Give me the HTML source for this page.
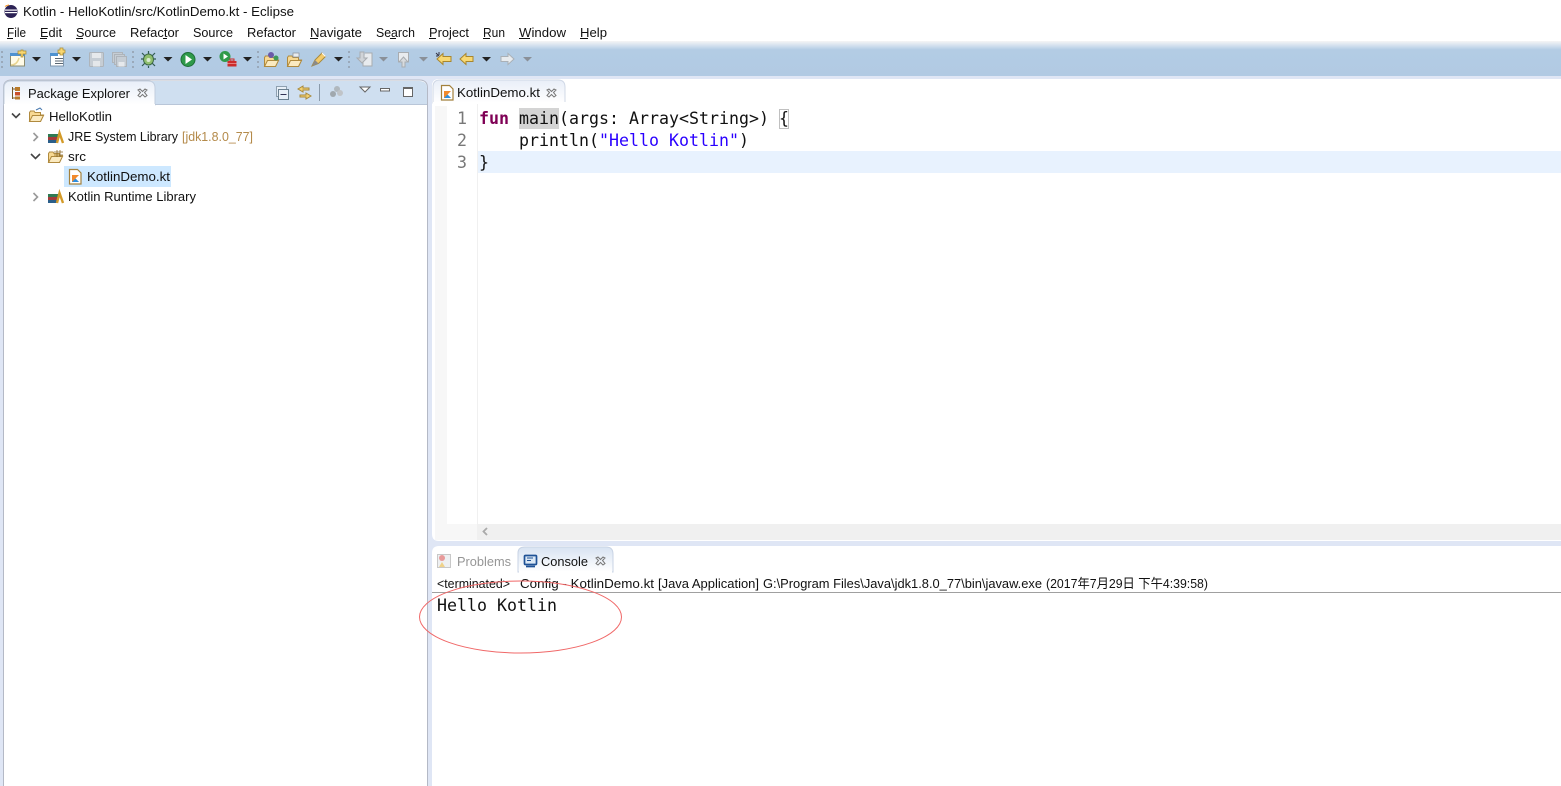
<!DOCTYPE html>
<html><head><meta charset="utf-8"><title>Kotlin - HelloKotlin/src/KotlinDemo.kt - Eclipse</title>
<style>
html,body{margin:0;padding:0;width:1561px;height:786px;overflow:hidden;background:#fff}
svg{display:block}
text{font-family:"Liberation Sans","Noto Sans CJK SC",sans-serif;font-size:13px;fill:#111}
.m{font-family:"DejaVu Sans Mono","Liberation Mono",monospace;font-size:16.6px;fill:#111}
</style></head><body>
<svg width="1561" height="786" viewBox="0 0 1561 786" xmlns="http://www.w3.org/2000/svg">
<defs>
<linearGradient id="tb" x1="0" y1="0" x2="0" y2="1"><stop offset="0" stop-color="#f5f5f5"/><stop offset=".12" stop-color="#d6e2ef"/><stop offset=".25" stop-color="#b3cce4"/><stop offset="1" stop-color="#b1cae3"/></linearGradient>
<linearGradient id="tab" x1="0" y1="0" x2="0" y2="1"><stop offset="0" stop-color="#e8eef8"/><stop offset="1" stop-color="#fff"/></linearGradient>
<linearGradient id="cn" x1="0" y1="0" x2="0" y2="1"><stop offset="0" stop-color="#d8e3f2"/><stop offset="1" stop-color="#fff"/></linearGradient>
<g id="lib"><rect x="0" y="4" width="10" height="3" fill="#2f7a52"/><rect x="0" y="7" width="10" height="3" fill="#a33b3b"/><rect x="0" y="10" width="10" height="3" fill="#2b5f8a"/><path d="M9 13 L11.500 3 L15 13" fill="none" stroke="#d39a28" stroke-width="2.400"/></g>
<g id="kt"><path d="M1.500 .5h8l3.500 3.500v11h-11.500z" fill="#fff" stroke="#a3813c" stroke-width="1.200"/><path d="M4 6h7L7.500 9.500l3.500 3.500H4z" fill="#f28a2c"/><path d="M4 13l3.500-3.500 3.500 3.500z" fill="#2d8fe0"/></g>
<g id="x" fill="none" stroke="#777" stroke-width="1"><path d="M1 2l2-1 2.500 2.500L8 1l2 1-2.500 2.500L10 7.500 8 9 5.500 6.500 3 9 1 7.500 3.500 4.500z"/></g>
<path id="dd" d="M0 0h9l-4.500 4.500z"/>
<g id="grip" fill="#9aa9ba"><rect x="0" y="0" width="2" height="2"/><rect x="0" y="5" width="2" height="2"/><rect x="0" y="10" width="2" height="2"/><rect x="0" y="15" width="2" height="2"/></g>
<g id="folder"><path d="M.5 4.500v9h11l3-6.500h-3V4.500H6L5 3H1.500z" fill="#f8d993" stroke="#b08a3e"/><path d="M.5 13.500l3-6h11l-3 6z" fill="#fbeac0" stroke="#b08a3e"/></g>
</defs>

<rect width="1561" height="786" fill="#fff"/>
<!-- title -->
<circle cx="11" cy="11.500" r="6.500" fill="#2c2255"/><rect x="5" y="9.500" width="12" height="1.200" fill="#fff"/><rect x="5" y="12" width="12" height="1.200" fill="#fff"/><path d="M5 6.500A7 7 0 0 1 9 5" stroke="#f7941e" stroke-width="1" fill="none"/>
<text x="23" y="16" textLength="271" lengthAdjust="spacingAndGlyphs">Kotlin - HelloKotlin/src/KotlinDemo.kt - Eclipse</text>
<!-- menu -->
<g>
<text x="7" y="37" textLength="19" lengthAdjust="spacingAndGlyphs">File</text><rect x="7" y="38" width="6" height="1" fill="#111"/>
<text x="40" y="37" textLength="22" lengthAdjust="spacingAndGlyphs">Edit</text><rect x="40" y="38" width="7" height="1" fill="#111"/>
<text x="76" y="37" textLength="40" lengthAdjust="spacingAndGlyphs">Source</text><rect x="76" y="38" width="7" height="1" fill="#111"/>
<text x="130" y="37" textLength="49" lengthAdjust="spacingAndGlyphs">Refactor</text><rect x="163" y="38" width="4" height="1" fill="#111"/>
<text x="193" y="37" textLength="40" lengthAdjust="spacingAndGlyphs">Source</text>
<text x="247" y="37" textLength="49" lengthAdjust="spacingAndGlyphs">Refactor</text>
<text x="310" y="37" textLength="52" lengthAdjust="spacingAndGlyphs">Navigate</text><rect x="310" y="38" width="8" height="1" fill="#111"/>
<text x="376" y="37" textLength="39" lengthAdjust="spacingAndGlyphs">Search</text><rect x="390" y="38" width="6" height="1" fill="#111"/>
<text x="429" y="37" textLength="40" lengthAdjust="spacingAndGlyphs">Project</text><rect x="429" y="38" width="7" height="1" fill="#111"/>
<text x="483" y="37" textLength="22" lengthAdjust="spacingAndGlyphs">Run</text><rect x="483" y="38" width="7" height="1" fill="#111"/>
<text x="519" y="37" textLength="47" lengthAdjust="spacingAndGlyphs">Window</text><rect x="519" y="38" width="11" height="1" fill="#111"/>
<text x="580" y="37" textLength="27" lengthAdjust="spacingAndGlyphs">Help</text><rect x="580" y="38" width="8" height="1" fill="#111"/>
</g>
<!-- toolbar -->
<rect y="41" width="1561" height="35" fill="url(#tb)"/>
<rect y="76" width="1561" height="710" fill="#dfe6f5"/>
<use href="#grip" x="1" y="51"/><use href="#grip" x="132" y="51"/><use href="#grip" x="257" y="51"/><use href="#grip" x="348" y="51"/>
<!-- new -->
<rect x="10.500" y="53.500" width="14" height="12.500" fill="#fffbe8" stroke="#8c8c70"/><rect x="10" y="53" width="15" height="3" fill="#4f92d0"/><path d="M11 65q6 0 8-7" stroke="#e8d490" stroke-width="1.500" fill="none"/><path d="M19.500 51v-1h3v-1h2v1h3v3h-3v3h-2v-3h-3z" transform="translate(-1.500 1)" fill="#f9d772" stroke="#a98a30" stroke-width=".7"/>
<use href="#dd" x="32" y="57" fill="#222"/>
<rect x="50.500" y="53.500" width="13" height="12.500" fill="#fff" stroke="#7f96ad"/><rect x="50" y="53" width="8" height="3" fill="#4f92d0"/><path d="M55 58.500h8M55 61h8M55 63.500h8" stroke="#5a6672"/><path d="M58 53v-3h2v-2h3v2h2v3h-2v2h-3v-2z" fill="#f9d772" stroke="#a98a30" stroke-width=".7"/>
<use href="#dd" x="72" y="57" fill="#222"/>
<!-- save -->
<rect x="89.500" y="52.500" width="14" height="14" rx="1" fill="#c6cdd4" stroke="#aeb4ba"/><rect x="92" y="53" width="9" height="5" fill="#e6e9ec"/><rect x="93" y="61" width="7" height="5.500" fill="#e4e7ea"/>
<rect x="112.500" y="52.500" width="10" height="10" fill="#c6cdd4" stroke="#aeb4ba"/><rect x="114.500" y="54.500" width="10" height="10" fill="#c6cdd4" stroke="#aeb4ba"/><rect x="116.500" y="56.500" width="10" height="10" fill="#c6cdd4" stroke="#aeb4ba"/><rect x="118.500" y="62" width="6" height="4.500" fill="#e6e9ec"/>
<!-- debug -->
<path d="M142 53l4 4M155 53l-4 4M141 59h4M156 59h-4M142 66l4-4M155 66l-4-4M148.500 51v3M148.500 66v2" stroke="#2f5a50" stroke-width="1.200"/><ellipse cx="148.500" cy="59.500" rx="5" ry="5.500" fill="#8fbf6e" stroke="#3f6a48"/><circle cx="148.500" cy="60" r="2" fill="#d8ead0"/>
<use href="#dd" x="163.500" y="57" fill="#222"/>
<circle cx="188" cy="59.500" r="7" fill="#2f9a4a" stroke="#1d6e35"/><path d="M185.500 55l6.500 4.500-6.500 4.500z" fill="#fff"/>
<use href="#dd" x="203" y="57" fill="#222"/>
<circle cx="225" cy="56.500" r="5.500" fill="#2f9a4a"/><path d="M223.500 53.500l4.500 3-4.500 3z" fill="#fff"/><rect x="227.500" y="61" width="9" height="5.500" fill="#cc2b2b"/><rect x="230" y="59" width="4" height="2" fill="none" stroke="#cc2b2b"/><path d="M227.500 63.500h9" stroke="#f0a0a0" stroke-width=".7"/>
<use href="#dd" x="243" y="57" fill="#222"/>
<!-- open -->
<use href="#folder" x="264" y="53"/><circle cx="271" cy="55" r="3" fill="#6a5aa8"/><circle cx="276" cy="58" r="2.500" fill="#3f9a5a"/>
<use href="#folder" x="287" y="53"/><rect x="293" y="53" width="6" height="4" fill="#e8ecf0" stroke="#8a8f96" stroke-width=".7"/>
<path d="M312 66l3-6 7-7 3.500 3.500-7 7z" fill="#f4cb6b" stroke="#a88a3c"/><path d="M312 66l3-6 3.500 3.500z" fill="#8a8a8a"/><path d="M322 53l3.500 3.500" stroke="#fff"/>
<use href="#dd" x="334" y="57" fill="#222"/>
<!-- nav -->
<path d="M365 53h7v13h-9v-4" fill="#e8ebee" stroke="#a8acb0"/><path d="M360 52h4v6h3l-5 5-5-5h3z" fill="#d0d4d8" stroke="#a8acb0"/>
<use href="#dd" x="379" y="57" fill="#8a9098"/>
<path d="M398.500 52.500h10v9h-10z" fill="#e8ebee" stroke="#a8acb0"/><path d="M402 67v-5h-3l4.500-5 4.500 5h-3v5z" fill="#d8dbde" stroke="#a8acb0"/>
<use href="#dd" x="419" y="57" fill="#8a9098"/>
<path d="M437 59l6-5.500v3h8v5h-8v3z" fill="#f8d872" stroke="#a8862e"/><path d="M436 53l3 3M439 52v3M436 56h2" stroke="#334"/>
<path d="M460 59l6-5.500v3h7v5h-7v3z" fill="#f8d872" stroke="#a8862e"/>
<use href="#dd" x="482" y="57" fill="#222"/>
<path d="M514 59l-6-5.500v3h-7v5h7v3z" fill="#e8ebee" stroke="#aab0b6"/>
<use href="#dd" x="523" y="57" fill="#8a9098"/>

<!-- left panel -->
<path d="M3.500 786V88q0-8 8-8h408q8 0 8 8v698" fill="#fff" stroke="#b4b9c6"/>
<path d="M4 104V88q0-7 7-7h408q8 0 8 7v16z" fill="#cfdff0"/>
<path d="M4 105V88q0-7 7-7h137q7 0 7 7v17z" fill="url(#tab)" stroke="#c2cede"/>
<rect x="4" y="104" width="423" height="1" fill="#b9c6d8"/><rect x="4" y="104" width="151" height="1.500" fill="#fff"/>
<!-- pkg icon -->
<path d="M12.500 87v12" stroke="#7a5a2a"/><path d="M13 89h2M13 98h2" stroke="#7a5a2a"/><rect x="15" y="87" width="5" height="4" fill="#b97a2a"/><rect x="15" y="92" width="5" height="3.500" fill="#c9502a"/><rect x="15" y="96.500" width="5" height="3" fill="#b97a2a"/>
<text x="28" y="98" textLength="102" lengthAdjust="spacingAndGlyphs">Package Explorer</text>
<use href="#x" x="137" y="88"/>
<!-- panel toolbar -->
<rect x="276.500" y="86.500" width="10" height="10" fill="#e8f0f8" stroke="#8ea0b0"/><rect x="278.500" y="89.500" width="10" height="10" fill="#e8f0f8" stroke="#6a8090"/><path d="M280.500 94.500h6" stroke="#335"/>
<path d="M303 86l-5 3 5 3v-2h6v-2h-6z" fill="#f4d272" stroke="#a88a3c"/><path d="M306 93l5 3-5 3v-2h-6v-2h6z" fill="#f4d272" stroke="#a88a3c"/>
<rect x="319" y="84" width="1" height="17" fill="#8a9aaa"/>
<circle cx="337" cy="89" r="3" fill="#b0b8be"/><circle cx="333" cy="94" r="3" fill="#a0a8ae"/><circle cx="340" cy="93" r="3" fill="#c0c4c8"/>
<path d="M360 87h10l-5 5z" fill="#fff" stroke="#666"/>
<rect x="380.500" y="88.500" width="9" height="2.500" fill="#fff" stroke="#666"/>
<rect x="403.500" y="87.500" width="9" height="9" fill="#fff" stroke="#666"/><rect x="403" y="87" width="10" height="2" fill="#666"/>
<!-- tree -->
<path d="M12 113.500l4 4 4-4" fill="none" stroke="#444" stroke-width="1.600"/>
<use href="#folder" x="29" y="108"/><path d="M36 110l4-2 2 2" fill="none" stroke="#4a7ab0"/>
<text x="49" y="121" textLength="63" lengthAdjust="spacingAndGlyphs">HelloKotlin</text>
<path d="M33.500 133l4 4-4 4" fill="none" stroke="#999" stroke-width="1.600"/>
<use href="#lib" x="48" y="130"/>
<text x="68" y="141" textLength="110" lengthAdjust="spacingAndGlyphs">JRE System Library</text>
<text x="182" y="141" textLength="71" lengthAdjust="spacingAndGlyphs" style="fill:#b48a4a">[jdk1.8.0_77]</text>
<path d="M31 154l4.500 4.500 4.500-4.500" fill="none" stroke="#444" stroke-width="1.600"/>
<use href="#folder" x="48" y="149"/><path d="M54 152h9M54 155h9M57 150v7M60 150v7" stroke="#8a6a2a" stroke-width=".8"/>
<text x="68" y="161" textLength="18" lengthAdjust="spacingAndGlyphs">src</text>
<rect x="64" y="166" width="107" height="21" fill="#cde8ff"/>
<use href="#kt" x="68" y="169"/>
<text x="87" y="181" textLength="83" lengthAdjust="spacingAndGlyphs">KotlinDemo.kt</text>
<path d="M33.500 193l4 4-4 4" fill="none" stroke="#999" stroke-width="1.600"/>
<use href="#lib" x="48" y="190"/>
<text x="68" y="201" textLength="128" lengthAdjust="spacingAndGlyphs">Kotlin Runtime Library</text>

<!-- editor -->
<path d="M432 534V86q0-7 7-7h1122v462H439q-7 0-7-7z" fill="#fff"/>
<path d="M433 103V87q0-7 7-7h118q7 0 7 7v16z" fill="url(#tab)" stroke="#d0d8e6"/>
<rect x="433" y="102" width="1128" height="2" fill="#fff"/>
<use href="#kt" x="440" y="85"/>
<text x="457" y="97" textLength="83" lengthAdjust="spacingAndGlyphs">KotlinDemo.kt</text>
<use href="#x" x="546" y="88"/>
<rect x="435" y="106" width="12" height="418" fill="#f7f7f7"/><rect x="477" y="104" width="1" height="420" fill="#f0f0f0"/>
<rect x="478" y="151" width="1083" height="22" fill="#e8f2fe"/>
<rect x="519" y="108" width="40" height="21" fill="#d4d4d4"/>
<rect x="779.500" y="109.500" width="9" height="19" fill="none" stroke="#c0c0c0"/>
<g class="code">
<text class="m" x="457" y="124" style="fill:#787878">1</text>
<text class="m" x="457" y="146" style="fill:#787878">2</text>
<text class="m" x="457" y="168" style="fill:#787878">3</text>
<text class="m" x="479" y="124" textLength="30" style="fill:#7f0055;font-weight:bold">fun</text>
<text class="m" x="519" y="124" textLength="270">main(args: Array&lt;String&gt;) {</text>
<text class="m" x="519" y="146" textLength="80">println(</text>
<text class="m" x="599" y="146" textLength="140" style="fill:#2a00ff">"Hello Kotlin"</text>
<text class="m" x="739" y="146">)</text>
<text class="m" x="479" y="168">}</text>
</g>
<!-- scroll -->
<rect x="435" y="524" width="42" height="16" fill="#f7f7f7"/>
<rect x="477" y="524" width="1084" height="16" fill="#f0f0f0"/>
<path d="M487 528l-3.500 3.500 3.500 3.500" fill="none" stroke="#aaa" stroke-width="1.800"/>

<!-- console -->
<path d="M432 786V553q0-7 7-7h1122v240z" fill="#fff"/>
<path d="M518 572V553q0-6 7-6h81q7 0 7 7v18z" fill="url(#cn)" stroke="#c8d3e4"/>
<rect x="519" y="571" width="93" height="2" fill="#fff"/>
<!-- problems icon -->
<rect x="437.500" y="554.500" width="13" height="13" fill="#eef0f2" stroke="#c8c8c8"/><circle cx="442" cy="558" r="3" fill="#e89a9a"/><path d="M439 567l3-5 3 5z" fill="#efd28a"/>
<text x="457" y="566" textLength="54" lengthAdjust="spacingAndGlyphs" style="fill:#969696">Problems</text>
<!-- console icon -->
<rect x="524.500" y="555.500" width="12" height="9" rx="1" fill="#dbe8f5" stroke="#1f5296" stroke-width="1.700"/><path d="M527 558h6M527 560.500h4" stroke="#1f5296"/><path d="M526 566.500h9" stroke="#1f5296" stroke-width="1.700"/>
<text x="541" y="566" textLength="47" lengthAdjust="spacingAndGlyphs">Console</text>
<use href="#x" x="595" y="556"/>
<text x="437" y="588" textLength="73" lengthAdjust="spacingAndGlyphs">&lt;terminated&gt;</text>
<text x="520" y="588" textLength="134" lengthAdjust="spacingAndGlyphs">Config - KotlinDemo.kt</text>
<text x="658" y="588" textLength="101" lengthAdjust="spacingAndGlyphs">[Java Application]</text>
<text x="763" y="588" textLength="279" lengthAdjust="spacingAndGlyphs">G:\Program Files\Java\jdk1.8.0_77\bin\javaw.exe</text>
<text x="1046" y="588" textLength="162" lengthAdjust="spacingAndGlyphs">(2017年7月29日 下午4:39:58)</text>
<rect x="432" y="592" width="1129" height="1" fill="#a0a0a0"/>
<text class="m" x="437" y="611" textLength="120">Hello Kotlin</text>
<ellipse cx="520.500" cy="617" rx="101" ry="36" fill="none" stroke="#f06868" stroke-width="1"/>
</svg>
</body></html>
